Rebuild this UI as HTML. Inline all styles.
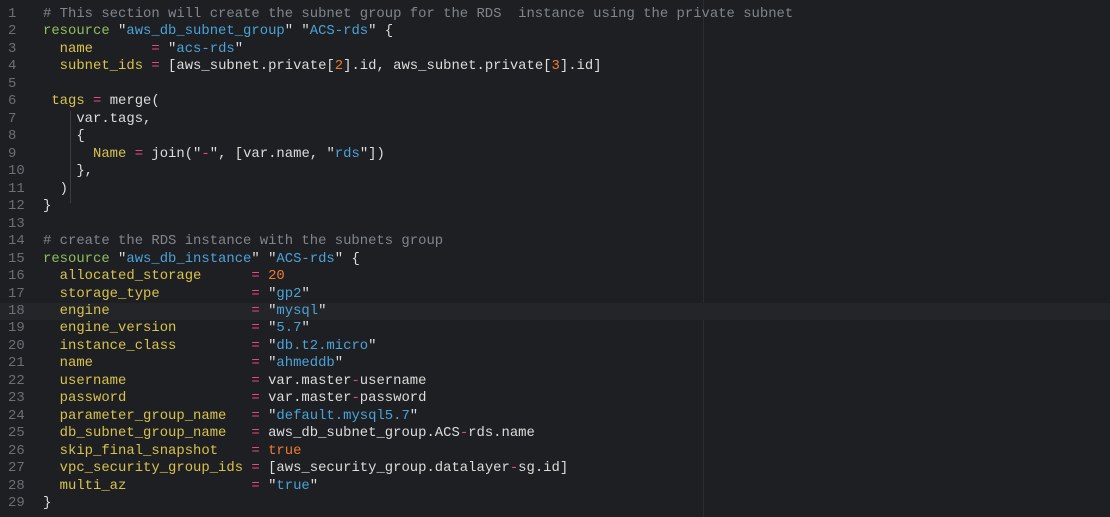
<!DOCTYPE html>
<html><head><meta charset="utf-8"><style>
body{margin:0;background:#1e1f22;width:1110px;height:517px;overflow:hidden;font-family:"Liberation Mono",monospace;font-size:13.9px;}
.wrap{position:absolute;top:6px;left:0;width:1110px}
.l{height:17.47px;line-height:17.47px;white-space:pre;position:relative;color:#dcdcdc}
.n{position:absolute;left:8px;color:#6b6f76}
.c{position:absolute;left:43px}
.hl{background:#242529}
.cm{color:#80858e}.k{color:#8fbf5c}.s{color:#4aa3d8}.a{color:#d8c24e}.o{color:#e8497f}.num{color:#ee7a32}
.ruler{position:absolute;left:703px;top:0;width:1px;height:517px;background:#2a2c31}
.g{position:absolute;width:1px;background:#3a3c42}
</style></head><body>
<div class="ruler"></div>
<div class="g" style="left:70px;top:111px;height:92px"></div>
<div class="wrap">
<div class="l"><span class="n">1</span><span class="c cm"># This section will create the subnet group for the RDS  instance using the private subnet</span></div>
<div class="l"><span class="n">2</span><span class="c"><span class="k">resource</span> "<span class="s">aws_db_subnet_group</span>" "<span class="s">ACS-rds</span>" {</span></div>
<div class="l"><span class="n">3</span><span class="c">  <span class="a">name</span>       <span class="o">=</span> "<span class="s">acs-rds</span>"</span></div>
<div class="l"><span class="n">4</span><span class="c">  <span class="a">subnet_ids</span> <span class="o">=</span> [aws_subnet.private[<span class="num">2</span>].id, aws_subnet.private[<span class="num">3</span>].id]</span></div>
<div class="l"><span class="n">5</span></div>
<div class="l"><span class="n">6</span><span class="c"> <span class="a">tags</span> <span class="o">=</span> merge(</span></div>
<div class="l"><span class="n">7</span><span class="c">    var.tags,</span></div>
<div class="l"><span class="n">8</span><span class="c">    {</span></div>
<div class="l"><span class="n">9</span><span class="c">      <span class="a">Name</span> <span class="o">=</span> join("<span class="o">-</span>", [var.name, "<span class="s">rds</span>"])</span></div>
<div class="l"><span class="n">10</span><span class="c">    },</span></div>
<div class="l"><span class="n">11</span><span class="c">  )</span></div>
<div class="l"><span class="n">12</span><span class="c">}</span></div>
<div class="l"><span class="n">13</span></div>
<div class="l"><span class="n">14</span><span class="c cm"># create the RDS instance with the subnets group</span></div>
<div class="l"><span class="n">15</span><span class="c"><span class="k">resource</span> "<span class="s">aws_db_instance</span>" "<span class="s">ACS-rds</span>" {</span></div>
<div class="l"><span class="n">16</span><span class="c">  <span class="a">allocated_storage</span>      <span class="o">=</span> <span class="num">20</span></span></div>
<div class="l"><span class="n">17</span><span class="c">  <span class="a">storage_type</span>           <span class="o">=</span> "<span class="s">gp2</span>"</span></div>
<div class="l hl"><span class="n">18</span><span class="c">  <span class="a">engine</span>                 <span class="o">=</span> "<span class="s">mysql</span>"</span></div>
<div class="l"><span class="n">19</span><span class="c">  <span class="a">engine_version</span>         <span class="o">=</span> "<span class="s">5.7</span>"</span></div>
<div class="l"><span class="n">20</span><span class="c">  <span class="a">instance_class</span>         <span class="o">=</span> "<span class="s">db.t2.micro</span>"</span></div>
<div class="l"><span class="n">21</span><span class="c">  <span class="a">name</span>                   <span class="o">=</span> "<span class="s">ahmeddb</span>"</span></div>
<div class="l"><span class="n">22</span><span class="c">  <span class="a">username</span>               <span class="o">=</span> var.master<span class="o">-</span>username</span></div>
<div class="l"><span class="n">23</span><span class="c">  <span class="a">password</span>               <span class="o">=</span> var.master<span class="o">-</span>password</span></div>
<div class="l"><span class="n">24</span><span class="c">  <span class="a">parameter_group_name</span>   <span class="o">=</span> "<span class="s">default.mysql5.7</span>"</span></div>
<div class="l"><span class="n">25</span><span class="c">  <span class="a">db_subnet_group_name</span>   <span class="o">=</span> aws_db_subnet_group.ACS<span class="o">-</span>rds.name</span></div>
<div class="l"><span class="n">26</span><span class="c">  <span class="a">skip_final_snapshot</span>    <span class="o">=</span> <span class="num">true</span></span></div>
<div class="l"><span class="n">27</span><span class="c">  <span class="a">vpc_security_group_ids</span> <span class="o">=</span> [aws_security_group.datalayer<span class="o">-</span>sg.id]</span></div>
<div class="l"><span class="n">28</span><span class="c">  <span class="a">multi_az</span>               <span class="o">=</span> "<span class="s">true</span>"</span></div>
<div class="l"><span class="n">29</span><span class="c">}</span></div>
</div>
</body></html>
